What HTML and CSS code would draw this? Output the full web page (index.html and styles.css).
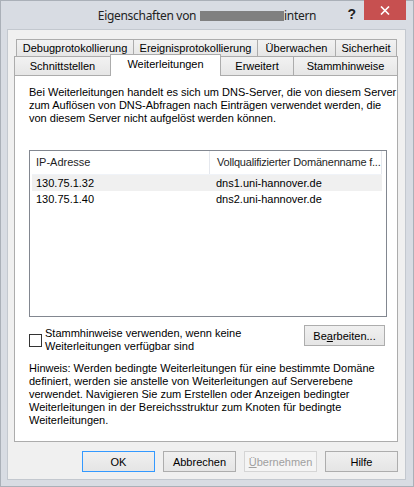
FILE: index.html
```html
<!DOCTYPE html>
<html lang="de">
<head>
    <meta charset="UTF-8">
    <title>Eigenschaften</title>
    <link rel="stylesheet" href="styles.css">
</head>
<body>
    <div class="window">
        <div class="titlebar">
            <div></div>
            <div class="title">Eigenschaften von <span class="redact"></span>intern</div>
            <div class="controls">
                <span class="help">?</span>
                <span class="close">
                    <svg width="10" height="9" viewBox="0 0 10 9">
                        <path d="M1 0.5 L9 8.5 M9 0.5 L1 8.5" stroke="#fff" stroke-width="1.6" fill="none"/>
                    </svg>
                </span>
            </div>
        </div>

        <div class="client">
            <div class="tabrow back">
                <div class="tab w118">Debugprotokollierung</div>
                <div class="tab w125">Ereignisprotokollierung</div>
                <div class="tab w79">Überwachen</div>
                <div class="tab w62">Sicherheit</div>
            </div>
            <div class="tabrow front">
                <div class="tab w97">Schnittstellen</div>
                <div class="tab w111 selected">Weiterleitungen</div>
                <div class="tab w74">Erweitert</div>
                <div class="tab w105">Stammhinweise</div>
            </div>

            <div class="panel">
                <p class="intro">Bei Weiterleitungen handelt es sich um DNS-Server, die von diesem Server<br>zum Auflösen von DNS-Abfragen nach Einträgen verwendet werden, die<br>von diesem Server nicht aufgelöst werden können.</p>

                <div class="listbox">
                    <div class="lv-head">
                        <div class="col1">IP-Adresse</div>
                        <div class="col2">Vollqualifizierter Domänenname f...</div>
                    </div>
                    <div class="lv-row hot">
                        <div class="col1">130.75.1.32</div>
                        <div class="col2">dns1.uni-hannover.de</div>
                    </div>
                    <div class="lv-row">
                        <div class="col1">130.75.1.40</div>
                        <div class="col2">dns2.uni-hannover.de</div>
                    </div>
                </div>

                <div class="options">
                    <label class="check">
                        <span class="box"></span>
                        <span>Stammhinweise verwenden, wenn keine<br>Weiterleitungen verfügbar sind</span>
                    </label>
                    <button class="btn edit">Be<u>a</u>rbeiten...</button>
                </div>

                <p class="note">Hinweis: Werden bedingte Weiterleitungen für eine bestimmte Domäne<br>definiert, werden sie anstelle von Weiterleitungen auf Serverebene<br>verwendet. Navigieren Sie zum Erstellen oder Anzeigen bedingter<br>Weiterleitungen in der Bereichsstruktur zum Knoten für bedingte<br>Weiterleitungen.</p>
            </div>

            <div class="buttons">
                <button class="btn default">OK</button>
                <button class="btn">Abbrechen</button>
                <button class="btn" disabled><u>Ü</u>bernehmen</button>
                <button class="btn">Hilfe</button>
            </div>
        </div>
    </div>
</body>
</html>
```

FILE: styles.css
```css
body {
    margin: 0;
    font-family: "Liberation Sans", Arial, sans-serif;
    font-size: 11px;
    color: #000;
}

.window {
    width: 414px;
    height: 487px;
    box-sizing: border-box;
    border: 1px solid #aab0b8;
    background-color: #d8dce3;
    display: flex;
    flex-direction: column;
}

.titlebar {
    height: 28px;
    display: grid;
    grid-template-columns: 1fr auto 1fr;
}

.title {
    font-family: "Noto Sans", sans-serif;
    font-size: 12px;
    letter-spacing: -0.3px;
    padding-top: 6px;
    color: #222;
    white-space: nowrap;
}

.redact {
    display: inline-block;
    width: 84px;
    height: 10px;
    background-color: #808080;
    margin-left: 1px;
    vertical-align: -1px;
}

.controls {
    display: flex;
    justify-content: flex-end;
    align-items: flex-start;
    padding-right: 7px;
}

.help {
    font-family: "Liberation Sans", sans-serif;
    font-weight: bold;
    font-size: 14px;
    color: #222;
    margin-top: 5px;
    margin-right: 8px;
}

.close {
    width: 42px;
    height: 20px;
    margin-top: -1px;
    background-color: #c75050;
    display: flex;
    align-items: center;
    justify-content: center;
}

.client {
    margin: 0 7px 6px 6px;
    flex: 1;
    border: 1px solid #c3c8cf;
    background-color: #f0f0f0;
    padding-top: 9px;
}

.tabrow {
    display: flex;
}

.tabrow.back {
    margin-left: 8px;
    height: 17px;
}

.tabrow.front {
    margin-left: 6px;
    height: 19px;
}

.tab {
    box-sizing: border-box;
    border: 1px solid #acacac;
    border-bottom: none;
    background: linear-gradient(#f2f2f2, #e6e6e6);
    text-align: center;
    line-height: 16px;
    margin-left: -1px;
    white-space: nowrap;
}

.tab:first-child {
    margin-left: 0;
}

.front .tab {
    line-height: 18px;
}

.tab.selected {
    position: relative;
    z-index: 1;
    background: #fff;
    margin-top: -2px;
    height: 22px;
    line-height: 18px;
}

.w118 { width: 118px; }
.w125 { width: 125px; }
.w79 { width: 79px; }
.w62 { width: 62px; }
.w97 { width: 97px; }
.w111 { width: 111px; }
.w74 { width: 74px; }
.w105 { width: 105px; }

.panel {
    margin-left: 6px;
    width: 384px;
    height: 367px;
    box-sizing: border-box;
    border: 1px solid #acacac;
    background-color: #fff;
    padding: 10px 0 0 14px;
}

.intro, .note {
    margin: 0;
    line-height: 13px;
}

.listbox {
    margin-top: 25px;
    width: 358px;
    height: 167px;
    box-sizing: border-box;
    border: 1px solid #828790;
}

.lv-head, .lv-row {
    display: flex;
    margin-left: 2px;
    width: 350px;
}

.lv-head {
    height: 23px;
    line-height: 23px;
    border-bottom: 1px solid #f0f3f8;
    color: #1e1e1e;
}

.lv-head .col1, .lv-head .col2 {
    border-right: 1px solid #e5e8ee;
}

.lv-head .col2 {
    letter-spacing: -0.2px;
}

.lv-row {
    height: 16px;
    line-height: 16px;
}

.lv-row.hot {
    background-color: #f0f0f0;
}

.col1 {
    width: 173px;
    padding-left: 4px;
}

.col2 {
    flex: 1;
    min-width: 0;
    padding-left: 7px;
    white-space: nowrap;
    overflow: hidden;
}

.options {
    display: flex;
    align-items: flex-start;
    margin-top: 10px;
    width: 356px;
    justify-content: space-between;
}

.check {
    display: flex;
    align-items: center;
    gap: 3px;
    line-height: 13px;
}

.box {
    width: 13px;
    height: 13px;
    box-sizing: border-box;
    border: 1px solid #333;
    background-color: #fff;
}

.btn {
    font-family: "Liberation Sans", Arial, sans-serif;
    font-size: 11px;
    color: #000;
    height: 21px;
    width: 73px;
    padding: 0;
    border: 1px solid #adadad;
    background: linear-gradient(#f0f0f0, #e5e5e5);
}

.btn.edit {
    width: 81px;
    margin-top: -2px;
}

.btn.default {
    border-color: #3399ff;
}

.btn:disabled {
    color: #a0a0a0;
    border-color: #d5d5d5;
    background: #f4f4f4;
}

.note {
    margin-top: 9px;
}

.buttons {
    display: flex;
    justify-content: flex-end;
    gap: 8px;
    margin-top: 9px;
    padding-right: 7px;
}
```
